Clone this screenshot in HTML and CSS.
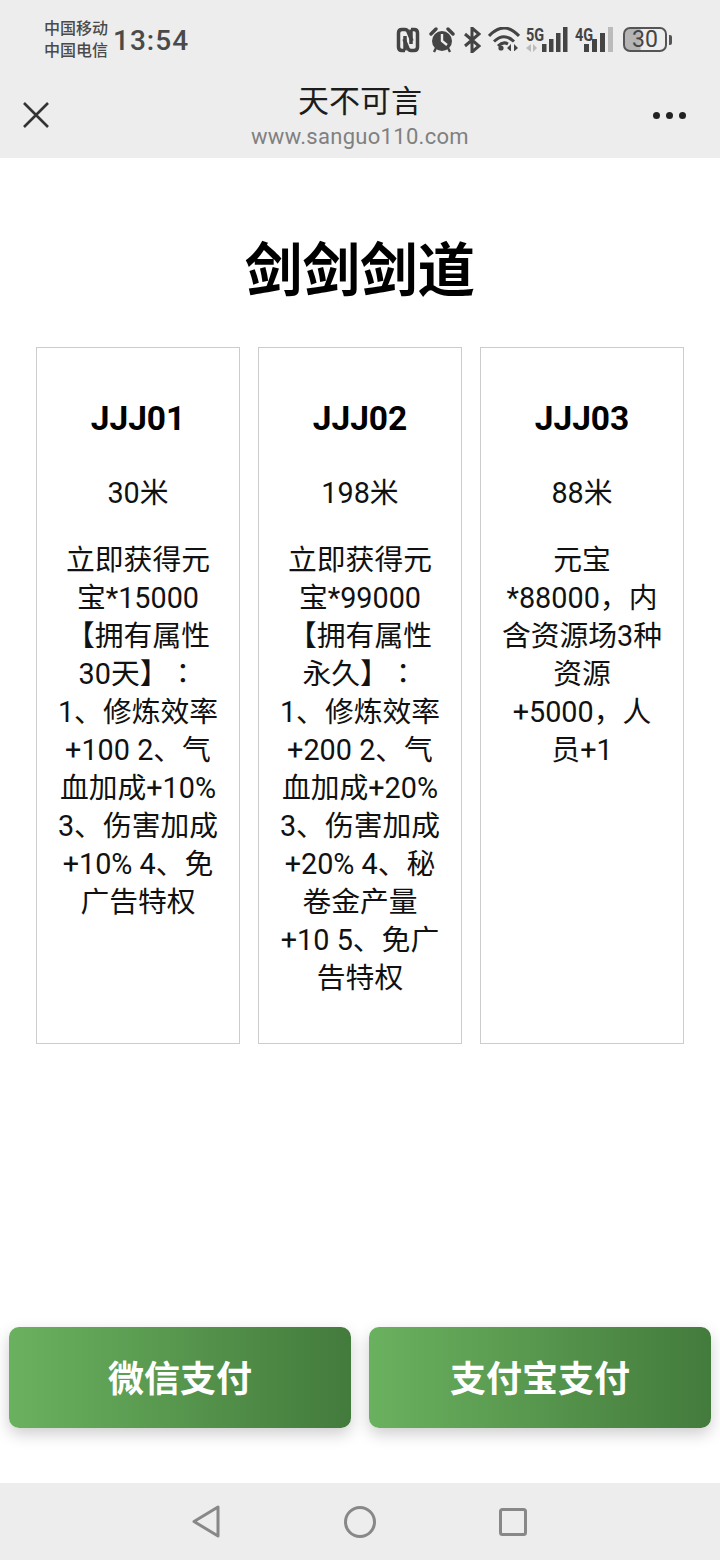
FILE: index.html
```html
<!DOCTYPE html>
<html lang="zh-CN">
<head>
  <meta charset="UTF-8">
  <title>天不可言</title>
  <meta name="viewport" content="width=device-width, initial-scale=1.0">
  <link rel="stylesheet" href="styles.css">
</head>
<body>
  <div class="phone">
    <div class="status-bar">
      <div class="carriers"><span>中国移动</span><span>中国电信</span></div>
      <div class="clock">13:54</div>
      <div class="status-icons">
        <svg width="24" height="26" viewBox="0 0 24 26" fill="none" stroke="#444" stroke-width="3.5">
          <path d="M9 23.500H6Q2.500 23.500 2.500 20V6Q2.500 2.500 6 2.500H9Q11 2.500 12 4.500L16 14M9 9V23.500"/>
          <path d="M15 2.500H18Q21.500 2.500 21.500 6V20Q21.500 23.500 18 23.500H15Q13 23.500 12 21.500L8 12M15 17V2.500"/>
        </svg>
        <svg class="alarm" width="26" height="26" viewBox="0 0 26 26">
          <circle cx="13" cy="14" r="10" fill="#444"/>
          <path d="M2 7L7 2M24 7L19 2" stroke="#444" stroke-width="3.4" stroke-linecap="round"/>
          <path d="M5 25L7 21M21 25L19 21" stroke="#444" stroke-width="2.4"/>
          <path d="M13 7V14L18 18" fill="none" stroke="#ededed" stroke-width="2.4"/>
        </svg>
        <svg class="bt" width="18" height="26" viewBox="0 0 18 26" fill="none" stroke="#444" stroke-width="3">
          <path d="M2 7L16 19L9 25V1L16 7L2 19"/>
        </svg>
        <svg class="wifi" width="32" height="24" viewBox="0 0 32 24" fill="none" stroke="#444" stroke-width="3">
          <path d="M1 9Q16 -7 31 9M6 14.500Q16 5 26 14.500M10 19Q15 14 20 17"/>
          <circle cx="13" cy="21" r="2.600" fill="#444" stroke="none"/>
          <path d="M19 21L23 17V24.500ZM26 17V24.500L30 21Z" fill="#444" stroke="none"/>
        </svg>
        <div class="signal signal-5g">
          <span class="net">5G</span>
          <svg width="42" height="26" viewBox="0 0 42 26">
            <path d="M0 21L5 17V25ZM7 17V25L11 21Z" fill="#bbb"/>
            <path d="M16 17h4.500v8h-4.500zM23 12h4.500v13h-4.500zM30 6h4.500v19h-4.500zM37 0h4.500v25h-4.500z" fill="#444"/>
          </svg>
        </div>
        <div class="signal">
          <span class="net">4G</span>
          <svg width="38" height="26" viewBox="0 0 38 26">
            <path d="M9 17h5v8h-5zM17 12h5v13h-5zM25 6h5v19h-5z" fill="#444"/>
            <path d="M33 0h5v25h-5z" fill="#bbb"/>
          </svg>
        </div>
        <div class="battery">
          <div class="battery-body">30</div>
          <div class="battery-tip"></div>
        </div>
      </div>
    </div>

    <header class="toolbar">
      <svg class="close" width="26" height="26" viewBox="0 0 26 26" fill="none" stroke="#333" stroke-width="2.600">
        <path d="M1 1L25 25M25 1L1 25"/>
      </svg>
      <div class="toolbar-title">
        <div class="name">天不可言</div>
        <div class="url">www.sanguo110.com</div>
      </div>
      <div class="more"><i></i><i></i><i></i></div>
    </header>

    <main class="content">
      <h1>剑剑剑道</h1>
      <div class="cards">
        <div class="card">
          <h2>JJJ01</h2>
          <p class="price">30米</p>
          <p class="desc">立即获得元宝*15000【拥有属性30天】<span class="colon" lang="zh-TW">：</span> 1、修炼效率+100 2、气血加成+10% 3、伤害加成+10% 4、免广告特权</p>
        </div>
        <div class="card">
          <h2>JJJ02</h2>
          <p class="price">198米</p>
          <p class="desc">立即获得元宝*99000【拥有属性永久】<span class="colon" lang="zh-TW">：</span> 1、修炼效率+200 2、气血加成+20% 3、伤害加成+20% 4、秘卷金产量+10 5、免广告特权</p>
        </div>
        <div class="card">
          <h2>JJJ03</h2>
          <p class="price">88米</p>
          <p class="desc">元宝*88000，内含资源场3种资源+5000，人员+1</p>
        </div>
      </div>
    </main>

    <div class="pay-bar">
      <button class="pay">微信支付</button>
      <button class="pay">支付宝支付</button>
    </div>

    <nav class="nav-bar">
      <svg class="nav-back" width="28" height="33" viewBox="0 0 28 33" fill="none" stroke="#888" stroke-width="3" stroke-linejoin="round">
        <path d="M26 2V31L2 16.500Z"/>
      </svg>
      <svg width="32" height="32" viewBox="0 0 32 32" fill="none" stroke="#888" stroke-width="3">
        <circle cx="16" cy="16" r="14.500"/>
      </svg>
      <svg width="30" height="30" viewBox="0 0 30 30" fill="none" stroke="#888" stroke-width="3" stroke-linejoin="round">
        <rect x="2.500" y="2.500" width="25" height="25" rx="2"/>
      </svg>
    </nav>
  </div>
</body>
</html>
```

FILE: styles.css
```css
* {
  box-sizing: border-box;
}
body {
  margin: 0;
  background: #fff;
  font-family: Roboto, "Noto Sans CJK SC", sans-serif;
  color: #111;
}
.phone {
  width: 720px;
  height: 1560px;
  display: flex;
  flex-direction: column;
  overflow: hidden;
}

/* status bar */
.status-bar {
  height: 72px;
  padding: 18px 48px 0 44px;
  background: #ededed;
  display: flex;
  align-items: flex-start;
  color: #4a4a4a;
}
.carriers {
  display: flex;
  flex-direction: column;
  font-size: 16px;
  line-height: 22px;
  font-weight: 500;
}
.clock {
  margin: 6px 0 0 5px;
  font-size: 28px;
  line-height: 34px;
  font-weight: 500;
  letter-spacing: 1px;
}
.status-icons {
  margin-left: auto;
  margin-top: 9px;
  display: flex;
  align-items: flex-start;
  gap: 7px;
}
.alarm {
  margin-left: 2px;
}
.bt {
  margin-left: 1px;
}
.signal-5g {
  margin-left: -1px;
}
.signal {
  position: relative;
  display: flex;
}
.net {
  position: absolute;
  left: 0;
  top: -2px;
  font-size: 19px;
  line-height: 20px;
  font-weight: 700;
  color: #444;
  transform: scaleX(0.76);
  transform-origin: left center;
}
.battery {
  margin-left: 3px;
  display: flex;
  align-items: center;
  gap: 2px;
  height: 25px;
}
.battery-body {
  width: 44px;
  height: 25px;
  border: 2px solid #555;
  border-radius: 7px;
  background: linear-gradient(90deg, #b4b4b4 36%, #ededed 42%);
  font-size: 23px;
  line-height: 21px;
  text-align: center;
  color: #444;
}
.battery-tip {
  width: 3px;
  height: 10px;
  background: #555;
  border-radius: 0 2px 2px 0;
}

/* toolbar */
.toolbar {
  height: 86px;
  padding: 0 34px;
  background: #ededed;
  display: grid;
  grid-template-columns: 1fr auto 1fr;
  align-items: center;
}
.close {
  margin-left: -11px;
}
.toolbar-title {
  margin-top: 4px;
  text-align: center;
}
.name {
  font-size: 31px;
  line-height: 40px;
  color: #1c1c1c;
}
.url {
  font-size: 22px;
  line-height: 30px;
  color: #808080;
  letter-spacing: 0.3px;
}
.more {
  justify-self: end;
  display: flex;
  gap: 6px;
}
.more i {
  width: 7px;
  height: 7px;
  border-radius: 50%;
  background: #222;
}

/* content */
.content {
  flex: 1;
  padding: 0 36px;
}
.content h1 {
  margin: 74px 0 35px;
  text-align: center;
  font-size: 57.6px;
  line-height: 80px;
  font-weight: 700;
  color: #000;
}
.cards {
  display: grid;
  grid-template-columns: repeat(3, 1fr);
  gap: 18px;
}
.card {
  height: 697px;
  padding: 48px 20px 0;
  border: 1px solid #ccc;
  text-align: center;
}
.card h2 {
  margin: 0;
  font-size: 33.5px;
  line-height: 46px;
  font-weight: 700;
  color: #000;
}
.price {
  margin: 32px 0 0;
  font-size: 28.8px;
  line-height: 38px;
}
.desc {
  margin: 29px 0 0;
  font-size: 28.8px;
  line-height: 38px;
  text-spacing-trim: space-all;
}
.colon {
  font-family: "Noto Sans CJK TC", sans-serif;
  line-height: 0;
}

/* pay buttons */
.pay-bar {
  padding: 0 9px 55px;
  display: flex;
  gap: 18px;
}
.pay {
  flex: 1;
  height: 101px;
  padding: 0 0 3px;
  border: none;
  border-radius: 10px;
  background: linear-gradient(90deg, #6ab15f, #437b3c);
  box-shadow: 0 6px 16px rgba(0,0,0,0.2);
  font-family: inherit;
  font-size: 36px;
  font-weight: 700;
  color: #fff;
}

/* bottom nav */
.nav-bar {
  height: 77px;
  background: #ededed;
  display: flex;
  align-items: center;
  justify-content: center;
  gap: 122px;
}
.nav-back {
  margin-right: 2px;
}
```
